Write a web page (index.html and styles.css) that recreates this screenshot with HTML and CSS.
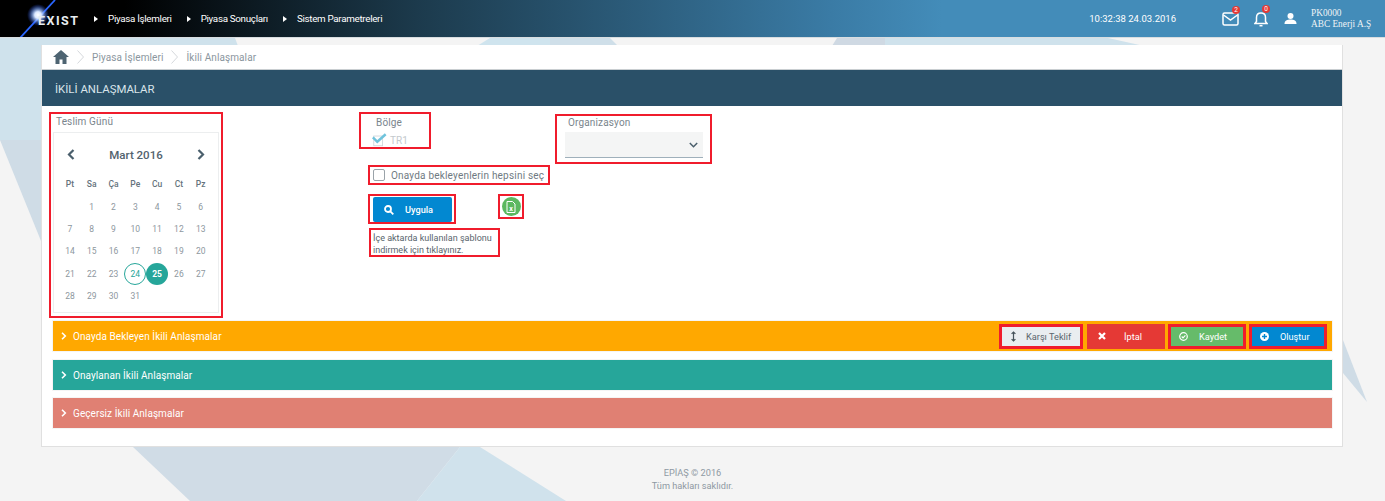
FILE: index.html
```html
<!DOCTYPE html>
<html lang="en">
<head>
  <meta charset="UTF-8">
  <meta name="viewport" content="width=device-width, initial-scale=1.0">
  <title>İkili Anlaşmalar</title>
  <link rel="stylesheet" href="styles.css">
</head>
<body>
  <!-- Background shapes behind the page -->
  <svg class="bg-shapes" width="1385" height="501" viewBox="0 0 1385 501">
    <polygon points="0,38 235,38 238,46 41,46 41,140 0,140" fill="#cfe2ec"/>
    <polygon points="0,140 41,140 41,241" fill="#cfdce6"/>
    <polygon points="490,38 550,38 550,46 477,46" fill="#cfe4ee"/>
    <polygon points="550,38 610,38 618,46 550,46" fill="#cfdfe9"/>
    <polygon points="837,38 885,38 885,46 832,46" fill="#cfd9e3"/>
    <polygon points="885,38 1108,38 1144,46 885,46" fill="#cfe2ec"/>
    <polygon points="133,447 460,447 417,501 190,501" fill="#d0dce6"/>
    <polygon points="460,447 480,447 566,501 417,501" fill="#d0e2ec"/>
    <polygon points="1343,340 1367,402 1343,373" fill="#cfdce6"/>
  </svg>

  <header class="topbar">
    <div class="logo">
      <svg class="logo-flare" width="70" height="38" viewBox="0 0 70 38">
        <defs>
          <radialGradient id="glow">
            <stop offset="0" stop-color="#fff"/>
            <stop offset="0.3" stop-color="#dbe8ff"/>
            <stop offset="0.6" stop-color="#7fa8ff" stop-opacity="0.6"/>
            <stop offset="1" stop-color="#1a4cff" stop-opacity="0"/>
          </radialGradient>
        </defs>
        <line x1="20" y1="38" x2="55" y2="0" stroke="#2a66ff" stroke-width="1.8"/>
        <circle cx="38" cy="15" r="11" fill="url(#glow)"/>
      </svg>
      <span class="logo-text">EXIST</span>
    </div>
    <nav class="topnav">
      <a class="topnav-item">Piyasa İşlemleri</a>
      <a class="topnav-item">Piyasa Sonuçları</a>
      <a class="topnav-item">Sistem Parametreleri</a>
    </nav>
    <div class="clock">10:32:38 24.03.2016</div>
    <div class="top-icon mail">
      <svg width="17" height="14" viewBox="0 0 17 14" fill="none" stroke="#fff" stroke-width="1.5">
        <rect x="1" y="1" width="15" height="12" rx="1.5"/>
        <path d="M1.5 3 L8.5 8 L15.5 3"/>
      </svg>
      <span class="count">2</span>
    </div>
    <div class="top-icon bell">
      <svg width="14" height="16" viewBox="0 0 14 16" fill="none" stroke="#fff" stroke-width="1.5">
        <path d="M1 12.5 H13 L11.5 10.5 V6.5 C11.500 3.500 9.500 2 7 2 C4.500 2 2.500 3.500 2.500 6.500 V10.500 Z"/>
        <path d="M5.500 14.700 H8.500"/>
      </svg>
      <span class="count">0</span>
    </div>
    <div class="top-icon user">
      <svg width="13" height="11" viewBox="0 0 13 11" fill="#fff">
        <circle cx="6.500" cy="3" r="3"/>
        <path d="M0.500 11 C0.500 7.500 3 6.500 6.500 6.500 C10 6.500 12.500 7.500 12.500 11 Z"/>
      </svg>
    </div>
    <div class="user-info">PK0000<br>ABC Enerji A.Ş</div>
  </header>

  <main class="panel">
    <div class="crumbs">
      <svg class="home" width="16" height="14" viewBox="0 0 16 14" fill="#4e6472">
        <path d="M8 0 L16 7 H13.500 V14 H9.500 V9.500 H6.500 V14 H2.500 V7 H0 Z"/>
      </svg>
      <svg class="crumb-sep" width="7" height="14" viewBox="0 0 7 14" fill="none" stroke="#d5d9dc"><path d="M.500 .500 L6.500 7 L.500 13.500"/></svg>
      <span>Piyasa İşlemleri</span>
      <svg class="crumb-sep" width="7" height="14" viewBox="0 0 7 14" fill="none" stroke="#d5d9dc"><path d="M.500 .500 L6.500 7 L.500 13.500"/></svg>
      <span>İkili Anlaşmalar</span>
    </div>
    <h1 class="page-title">İKİLİ ANLAŞMALAR</h1>

    <div class="filters">
      <section class="marked cal-box">
        <div class="field-label">Teslim Günü</div>
        <div class="calendar">
          <div class="cal-head">
            <svg width="8" height="11" viewBox="0 0 8 11" fill="none" stroke="#4a5f6c" stroke-width="2.200"><path d="M6.500 1 L2 5.500 L6.500 10"/></svg>
            <span>Mart 2016</span>
            <svg width="8" height="11" viewBox="0 0 8 11" fill="none" stroke="#4a5f6c" stroke-width="2.200"><path d="M1.500 1 L6 5.500 L1.500 10"/></svg>
          </div>
          <div class="cal-grid cal-days">
            <span>Pt</span><span>Sa</span><span>Ça</span><span>Pe</span><span>Cu</span><span>Ct</span><span>Pz</span>
          </div>
          <div class="cal-grid cal-dates">
            <span></span><span>1</span><span>2</span><span>3</span><span>4</span><span>5</span><span>6</span>
            <span>7</span><span>8</span><span>9</span><span>10</span><span>11</span><span>12</span><span>13</span>
            <span>14</span><span>15</span><span>16</span><span>17</span><span>18</span><span>19</span><span>20</span>
            <span>21</span><span>22</span><span>23</span><span class="today">24</span><span class="selected">25</span><span>26</span><span>27</span>
            <span>28</span><span>29</span><span>30</span><span>31</span>
          </div>
        </div>
      </section>

      <div class="mid-col">
        <section class="marked region-box">
          <div class="field-label region-label">Bölge</div>
          <div class="region-check">
            <svg width="15" height="14" viewBox="0 0 17 15" fill="none">
              <rect x="2" y="3" width="10" height="11" fill="#fff" stroke="#cfd6da"/>
              <path d="M1 4.500 L6 9.500 L15.500 1" stroke="#6fc3dc" stroke-width="2.800"/>
            </svg>
            <span>TR1</span>
          </div>
        </section>
        <section class="marked select-all">
          <span class="checkbox"></span>
          <span>Onayda bekleyenlerin hepsini seç</span>
        </section>
        <div class="action-row">
          <section class="marked apply-box">
            <button class="btn-apply">
              <svg width="10" height="10" viewBox="0 0 10 10" fill="none" stroke="#fff" stroke-width="1.800"><circle cx="4" cy="4" r="3"/><path d="M6.300 6.300 L9.300 9.300"/></svg>
              <span>Uygula</span>
            </button>
          </section>
          <section class="marked excel-box">
            <span class="excel">
              <svg width="10" height="12" viewBox="0 0 10 12" fill="none" stroke="#fff">
                <path d="M1 .500 H6.500 L9 3 V11.500 H1 Z"/>
                <text x="5" y="9.500" text-anchor="middle" class="excel-x">x</text>
              </svg>
            </span>
          </section>
        </div>
        <section class="marked hint">İçe aktarda kullanılan şablonu<br>indirmek için tıklayınız.</section>
      </div>

      <section class="marked org-box">
        <div class="field-label org-label">Organizasyon</div>
        <div class="select">
          <svg width="9" height="6" viewBox="0 0 9 6" fill="none" stroke="#4a5f6c" stroke-width="1.500"><path d="M.800 1 L4.500 4.700 L8.200 1"/></svg>
        </div>
      </section>
    </div>

    <div class="accordion">
      <div class="acc-row acc-orange">
        <svg class="acc-arrow" width="6" height="8" viewBox="0 0 6 8" fill="none" stroke="#fff" stroke-width="1.600"><path d="M1 .800 L4.300 4 L1 7.200"/></svg>
        <span class="acc-title">Onayda Bekleyen İkili Anlaşmalar</span>
        <div class="acc-actions">
          <button class="btn btn-light marked">
            <svg width="5" height="11" viewBox="0 0 5 11" fill="none" stroke="#45525a" stroke-width="1.200"><path d="M2.500 1 V10 M.600 2.900 L2.500 1 L4.400 2.900 M.600 8.100 L2.500 10 L4.400 8.100"/></svg>
            <span>Karşı Teklif</span>
          </button>
          <button class="btn btn-red">
            <svg width="8" height="8" viewBox="0 0 8 8" stroke="#fff" stroke-width="2.200"><path d="M1 1 L7 7 M7 1 L1 7"/></svg>
            <span>İptal</span>
          </button>
          <button class="btn btn-green marked">
            <svg width="9" height="9" viewBox="0 0 9 9" fill="none" stroke="#fff" stroke-width="1.200"><circle cx="4.500" cy="4.500" r="3.800"/><path d="M2.700 4.500 L4 5.800 L6.400 3.300"/></svg>
            <span>Kaydet</span>
          </button>
          <button class="btn btn-blue marked">
            <svg width="9" height="9" viewBox="0 0 9 9"><circle cx="4.500" cy="4.500" r="4.500" fill="#fff"/><path d="M2 4.500 H7 M4.500 2 V7" stroke="#0288d1" stroke-width="1.400"/></svg>
            <span>Oluştur</span>
          </button>
        </div>
      </div>
      <div class="acc-row acc-teal">
        <svg class="acc-arrow" width="6" height="8" viewBox="0 0 6 8" fill="none" stroke="#fff" stroke-width="1.600"><path d="M1 .800 L4.300 4 L1 7.200"/></svg>
        <span class="acc-title">Onaylanan İkili Anlaşmalar</span>
      </div>
      <div class="acc-row acc-salmon">
        <svg class="acc-arrow" width="6" height="8" viewBox="0 0 6 8" fill="none" stroke="#fff" stroke-width="1.600"><path d="M1 .800 L4.300 4 L1 7.200"/></svg>
        <span class="acc-title">Geçersiz İkili Anlaşmalar</span>
      </div>
    </div>
  </main>

  <footer class="footer">
    <div>EPİAŞ © 2016</div>
    <div>Tüm hakları saklıdır.</div>
  </footer>
</body>
</html>
```

FILE: styles.css
```css
* {
  margin: 0;
  padding: 0;
  box-sizing: border-box;
}

body {
  position: relative;
  width: 1385px;
  height: 501px;
  overflow: hidden;
  background: #f4f4f4;
  font-family: Roboto, "Liberation Sans", sans-serif;
  color: #6b7780;
}

/* Decorative background */
.bg-shapes {
  position: absolute;
  top: 0;
  left: 0;
}

/* Top bar */
.topbar {
  position: relative;
  display: flex;
  align-items: center;
  height: 38px;
  background: linear-gradient(90deg, #000 0, #000 9%, #1c3a4c 30%, #3a7ba5 60%, #438cb9 68%, #438cb9 100%);
  border-bottom: 1px solid #d8dde0;
  color: #fff;
}

.logo {
  position: relative;
  width: 94px;
  height: 37px;
  overflow: hidden;
}

.logo-flare {
  position: absolute;
  top: 0;
  left: 0;
}

.logo-text {
  position: absolute;
  top: 13px;
  left: 38px;
  font-size: 12.500px;
  font-weight: 700;
  letter-spacing: 1.500px;
  color: #e8edf0;
}

.topnav {
  display: flex;
  gap: 15px;
  font-size: 9.800px;
  letter-spacing: -0.300px;
}

.topnav-item {
  display: flex;
  align-items: center;
  gap: 10px;
}

.topnav-item::before {
  content: "";
  border-left: 4px solid #fff;
  border-top: 3.500px solid transparent;
  border-bottom: 3.500px solid transparent;
}

.clock {
  margin-left: auto;
  margin-right: 46px;
  font-size: 9.500px;
}

.top-icon {
  position: relative;
  display: flex;
  align-items: center;
}

.mail { margin-right: 15px; }
.bell { margin-right: 16px; }
.user { margin-right: 14px; }

.count {
  position: absolute;
  top: -6px;
  right: -1px;
  width: 8px;
  height: 8px;
  border-radius: 50%;
  background: #e53935;
  font-size: 6.500px;
  line-height: 8px;
  text-align: center;
}

.bell .count { right: -2px; }

.user-info {
  width: 74px;
  font-family: "Liberation Serif", serif;
  font-size: 9.300px;
  line-height: 10.500px;
  color: #eef3f6;
}

/* Main panel */
.panel {
  position: relative;
  width: 1302px;
  height: 402px;
  margin: 7px 0 0 41px;
  background: #fff;
  border-right: 1px solid #e0e0e0;
  border-bottom: 1px solid #e0e0e0;
  border-left: 1px solid #e0e0e0;
}

.crumbs {
  display: flex;
  align-items: center;
  height: 24px;
  padding-left: 11px;
  font-size: 10px;
  color: #8b969e;
  letter-spacing: 0.100px;
}

.crumb-sep { margin: 0 8px; }

.page-title {
  height: 37px;
  padding-left: 13px;
  border-top: 1px solid #c9ced1;
  background: #2a5068;
  font-size: 11.400px;
  font-weight: 400;
  line-height: 38px;
  color: #d9e4ea;
}

.filters {
  display: flex;
  height: 215px;
}

.marked {
  border: 2px solid #f01c2c;
}

.field-label {
  font-size: 10px;
  color: #7a858d;
  letter-spacing: 0.150px;
}

/* Calendar */
.cal-box {
  width: 174px;
  height: 206px;
  margin: 6px 0 0 7px;
  padding: 1px 2px 0;
}

.cal-box .field-label {
  padding-left: 3px;
  height: 17px;
  line-height: 13px;
}

.calendar {
  height: 181px;
  padding: 0 5px;
  border: 1px solid #eceeef;
}

.cal-head {
  display: flex;
  justify-content: space-between;
  align-items: center;
  height: 43px;
  padding: 0 8px;
  font-size: 11.500px;
  font-weight: 500;
  color: #52626e;
}

.cal-grid {
  display: grid;
  grid-template-columns: repeat(7, 21.800px);
  justify-items: center;
  align-items: center;
}

.cal-days {
  height: 16px;
  font-size: 8.500px;
  font-weight: 500;
  color: #65737c;
}

.cal-dates {
  grid-auto-rows: 22.200px;
  padding-top: 4px;
  font-size: 8.500px;
  color: #8d979e;
}

.cal-dates span {
  width: 22px;
  height: 22px;
  line-height: 22px;
  text-align: center;
  border-radius: 50%;
}

.cal-dates .today {
  border: 1px solid #26a69a;
  line-height: 20px;
  color: #26a69a;
}

.cal-dates .selected {
  background: #26a69a;
  font-weight: 700;
  color: #fff;
}

/* Middle column */
.mid-col {
  display: flex;
  flex-direction: column;
  align-items: flex-start;
  width: 196px;
  margin-left: 136px;
}

.region-box {
  width: 72px;
  height: 37px;
  margin-top: 6px;
}

.region-label {
  padding-left: 15px;
  line-height: 18px;
}

.region-check {
  display: flex;
  align-items: center;
  gap: 3px;
  padding: 1px 0 0 11px;
  font-size: 10px;
  color: #c3c9cd;
}

.select-all {
  display: flex;
  align-items: center;
  gap: 6px;
  width: 182px;
  height: 20px;
  margin: 16px 0 0 9px;
  padding-left: 3px;
  font-size: 10px;
  letter-spacing: 0.200px;
  white-space: nowrap;
  color: #6f7a82;
}

.checkbox {
  width: 12px;
  height: 12px;
  border: 1px solid #9aa3a9;
  border-radius: 2px;
}

.action-row {
  display: flex;
  align-items: flex-start;
  margin: 9px 0 0 9px;
}

.apply-box {
  height: 30px;
  width: 88px;
  padding: 1px 3px;
}

.btn-apply {
  display: flex;
  align-items: center;
  gap: 11px;
  width: 79px;
  height: 25px;
  padding-left: 11px;
  border: 0;
  border-radius: 2px;
  background: #0288d1;
  font: 500 9.200px Roboto, sans-serif;
  color: #fff;
}

.excel-box {
  display: flex;
  align-items: center;
  justify-content: center;
  width: 26px;
  height: 25px;
  margin-left: 42px;
}

.excel {
  display: flex;
  align-items: center;
  justify-content: center;
  width: 19px;
  height: 19px;
  border-radius: 50%;
  background: #5cb860;
}

.excel-x {
  fill: #fff;
  stroke: none;
  font-size: 7px;
  font-weight: 700;
}

.hint {
  width: 131px;
  height: 29px;
  margin: 4px 0 0 10px;
  padding: 2px 0 0 2px;
  font-size: 9px;
  line-height: 12px;
  white-space: nowrap;
  color: #58646c;
}

/* Organization select */
.org-box {
  width: 157px;
  height: 50px;
  margin-top: 8px;
  padding: 0 7px 0 8px;
}

.org-label {
  height: 16px;
  padding-left: 3px;
  line-height: 14px;
}

.select {
  display: flex;
  justify-content: flex-end;
  align-items: center;
  height: 26px;
  padding-right: 5px;
  background: #f4f5f5;
  border-bottom: 1px solid #9fb0bb;
}

/* Accordion rows */
.accordion {
  display: flex;
  flex-direction: column;
  width: 1279px;
  margin-left: 11px;
}

.acc-row {
  display: flex;
  align-items: center;
  height: 30px;
  padding: 0 5px 0 8px;
  font-size: 10px;
  letter-spacing: 0.070px;
  color: #fff;
  box-shadow: 0 0 0 1px rgba(0, 0, 0, 0.04);
}

.acc-orange { background: #ffa800; }
.acc-teal { margin: 9px 0 8px; background: #26a69a; }
.acc-salmon { background: #e08073; }

.acc-arrow { margin-right: 6px; }

.acc-actions {
  display: flex;
  gap: 3px;
  margin-left: auto;
}

.btn {
  display: flex;
  align-items: center;
  width: 78px;
  height: 25px;
  padding-left: 8px;
  border: 0;
  font: 400 9.200px Roboto, sans-serif;
  color: #fff;
}

.btn.marked { border: 3px solid #f01c2c; }

.btn-light {
  width: 84px;
  margin-right: 1px;
  padding-left: 9px;
  background: #e9edf0;
  color: #5b666e;
  gap: 10px;
}

.btn-red {
  background: #e53935;
  gap: 18px;
  padding-left: 11px;
}

.btn-green {
  background: #66bb6a;
  gap: 11px;
}

.btn-blue {
  background: #0288d1;
  gap: 11px;
}

/* Footer */
.footer {
  position: relative;
  margin-top: 20px;
  font-size: 9.200px;
  line-height: 12.500px;
  text-align: center;
  color: #8e99a3;
}
```
